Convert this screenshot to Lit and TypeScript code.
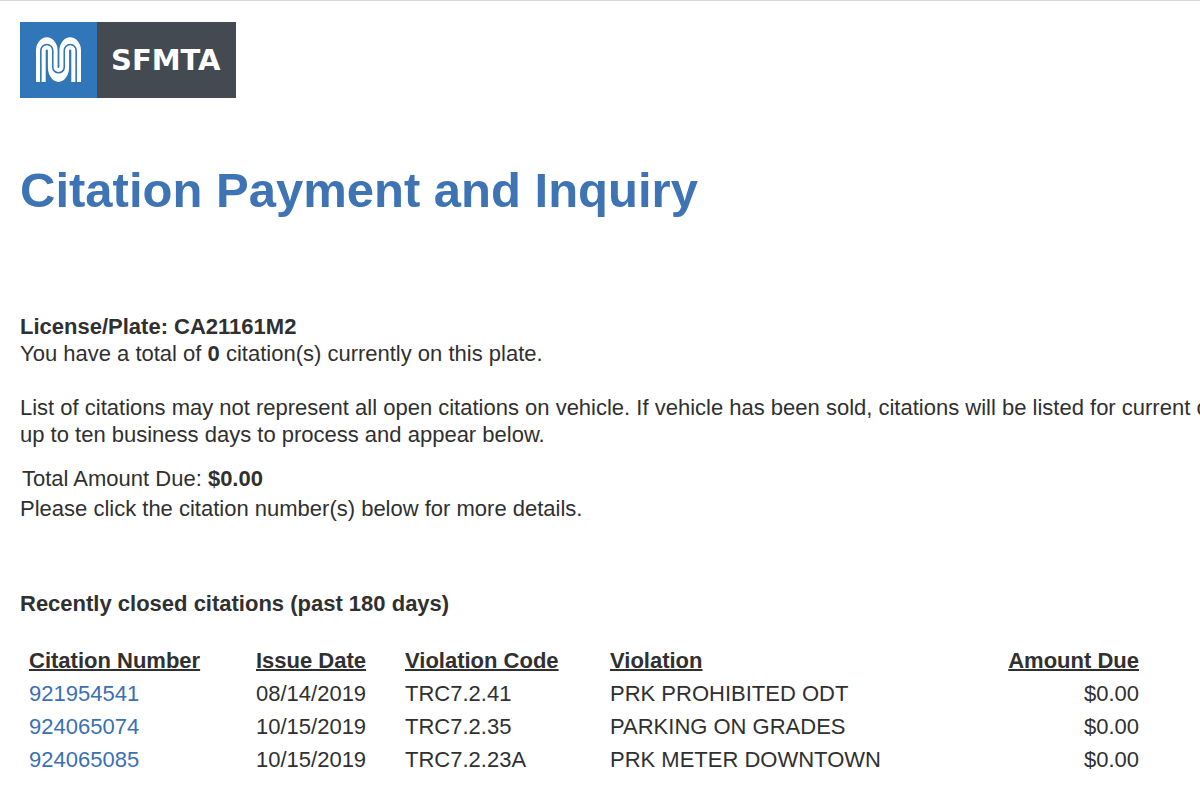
import { LitElement, html, css } from "lit";
import { customElement } from "lit/decorators.js";

interface Citation {
  id: string;
  issued: string;
  code: string;
  violation: string;
  due: string;
}

const citations: Citation[] = [
  { id: "921954541", issued: "08/14/2019", code: "TRC7.2.41", violation: "PRK PROHIBITED ODT", due: "$0.00" },
  { id: "924065074", issued: "10/15/2019", code: "TRC7.2.35", violation: "PARKING ON GRADES", due: "$0.00" },
  { id: "924065085", issued: "10/15/2019", code: "TRC7.2.23A", violation: "PRK METER DOWNTOWN", due: "$0.00" },
];

@customElement("app-root")
export class AppRoot extends LitElement {
  static styles = css`
    :host {
      display: block;
      box-sizing: border-box;
      min-height: 100vh;
      overflow: hidden;
      padding: 21px 20px 32px;
      border-top: 1px solid #d8d8d8;
      background: #fff;
      color: #303030;
      font: 22px/27px "Liberation Sans", Arial, sans-serif;
    }
    .logo {
      display: flex;
      width: fit-content;
      height: 76px;
      background: #434a52;
      color: #fff;
      text-decoration: none;
    }
    .mark {
      display: block;
      width: 77px;
      height: 76px;
      background: #3076b9;
    }
    .name {
      padding: 0 15px 0 14px;
      font: 700 29px/76px "DejaVu Sans", sans-serif;
    }
    h1 {
      margin: 64px 0 0;
      color: #3e74b4;
      font-size: 49px;
      line-height: 56px;
    }
    p {
      margin: 0;
    }
    .plate {
      margin-top: 95px;
    }
    .notice {
      margin-top: 27px;
      white-space: nowrap;
    }
    .total {
      margin-top: 17px;
      padding-left: 2px;
    }
    .hint {
      margin-top: 3px;
    }
    h2 {
      margin: 68px 0 0;
      font-size: 22px;
      line-height: 27px;
    }
    table {
      width: calc(100% - 32px);
      margin-top: 27px;
      border-collapse: collapse;
      table-layout: fixed;
    }
    th,
    td {
      padding: 3px 0 3px 9px;
      text-align: left;
      white-space: nowrap;
    }
    th {
      text-decoration: underline;
      text-decoration-thickness: 2px;
    }
    .number { width: 218px; }
    .date { width: 140px; }
    .code { width: 196px; }
    .amount { text-align: right; padding-right: 9px; }
    td a {
      color: #3a70b5;
      text-decoration: none;
    }
  `;

  render() {
    return html`
      <header>
        <a class="logo" href="#" aria-label="SFMTA home">
          <svg class="mark" viewBox="0 0 77 76" aria-hidden="true">
            <path
              d="M16 60V28.5a10.8 13.2 0 0 1 21.6 0V45a.9 .9 0 0 0 1.8 0V28.5a10.8 13.2 0 0 1 21.6 0V60H51.3V28.5a1.1 1.1 0 0 0-2.2 0V45A10.6 15 0 0 1 27.9 45V28.5a1.1 1.1 0 0 0-2.2 0V60Z"
              fill="#fff" />
            <path
              d="M20.85 61V28.5a5.95 5.95 0 0 1 11.9 0V45a5.75 5.75 0 0 0 11.5 0V28.5a5.95 5.95 0 0 1 11.9 0V61"
              fill="none" stroke="#3076b9" stroke-width="1.6" />
          </svg>
          <span class="name">SFMTA</span>
        </a>
      </header>
      <main>
        <h1>Citation Payment and Inquiry</h1>
        <p class="plate"><strong>License/Plate: CA21161M2</strong></p>
        <p>You have a total of <strong>0</strong> citation(s) currently on this plate.</p>
        <p class="notice">
          List of citations may not represent all open citations on vehicle. If vehicle has been sold, citations will be listed for current owner.<br />up to ten business days to process and appear below.
        </p>
        <p class="total">Total Amount Due: <strong>$0.00</strong></p>
        <p class="hint">Please click the citation number(s) below for more details.</p>
        <h2>Recently closed citations (past 180 days)</h2>
        <table>
          <thead>
            <tr>
              <th class="number" scope="col">Citation Number</th>
              <th class="date" scope="col">Issue Date</th>
              <th class="code" scope="col">Violation Code</th>
              <th scope="col">Violation</th>
              <th class="amount" scope="col">Amount Due</th>
            </tr>
          </thead>
          <tbody>
            ${citations.map(
              (c) => html`<tr>
                <td><a href="#${c.id}">${c.id}</a></td>
                <td>${c.issued}</td>
                <td>${c.code}</td>
                <td>${c.violation}</td>
                <td class="amount">${c.due}</td>
              </tr>`
            )}
          </tbody>
        </table>
      </main>
    `;
  }
}
